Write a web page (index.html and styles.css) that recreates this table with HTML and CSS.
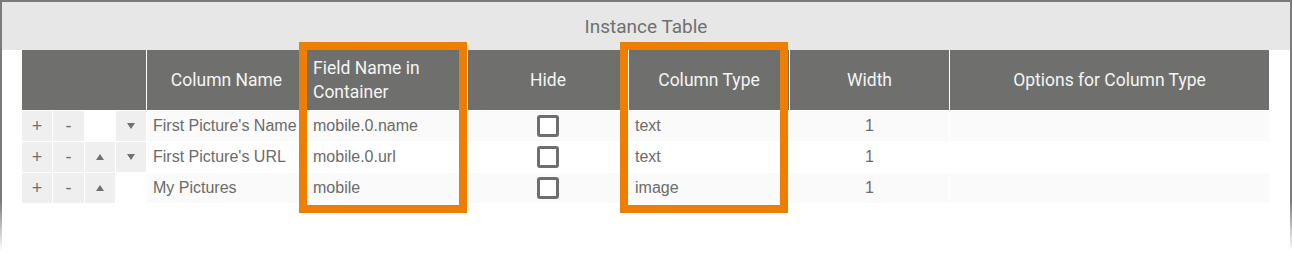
FILE: index.html
```html
<!DOCTYPE html>
<html lang="en">
<head>
    <meta charset="UTF-8">
    <title>Instance Table</title>
    <link rel="stylesheet" href="styles.css">
</head>
<body>

    <div class="frame">
        <!-- Title -->
        <div class="title-bar">Instance Table</div>

        <div class="table-wrap">
            <!-- Header row -->
            <div class="row head">
                <div class="cell"></div>
                <div class="cell">Column Name</div>
                <div class="cell left">Field Name in Container</div>
                <div class="cell">Hide</div>
                <div class="cell">Column Type</div>
                <div class="cell">Width</div>
                <div class="cell">Options for Column Type</div>
            </div>

            <div class="row body striped">
                <div class="controls">
                    <span class="btn">+</span>
                    <span class="btn">-</span>
                    <span class="btn empty"></span>
                    <span class="btn"><svg width="8" height="6" viewBox="0 0 8 6"><polygon points="0,0 8,0 4,6" fill="#707070"/></svg></span>
                </div>
                <div class="cell text">First Picture's Name</div>
                <div class="cell text">mobile.0.name</div>
                <div class="cell center"><span class="check"></span></div>
                <div class="cell text">text</div>
                <div class="cell center">1</div>
                <div class="cell"></div>
            </div>

            <div class="row body">
                <div class="controls">
                    <span class="btn">+</span>
                    <span class="btn">-</span>
                    <span class="btn"><svg width="8" height="6" viewBox="0 0 8 6"><polygon points="0,6 8,6 4,0" fill="#707070"/></svg></span>
                    <span class="btn"><svg width="8" height="6" viewBox="0 0 8 6"><polygon points="0,0 8,0 4,6" fill="#707070"/></svg></span>
                </div>
                <div class="cell text">First Picture's URL</div>
                <div class="cell text">mobile.0.url</div>
                <div class="cell center"><span class="check"></span></div>
                <div class="cell text">text</div>
                <div class="cell center">1</div>
                <div class="cell"></div>
            </div>

            <div class="row body striped">
                <div class="controls">
                    <span class="btn">+</span>
                    <span class="btn">-</span>
                    <span class="btn"><svg width="8" height="6" viewBox="0 0 8 6"><polygon points="0,6 8,6 4,0" fill="#707070"/></svg></span>
                    <span class="btn empty"></span>
                </div>
                <div class="cell text">My Pictures</div>
                <div class="cell text">mobile</div>
                <div class="cell center"><span class="check"></span></div>
                <div class="cell text">image</div>
                <div class="cell center">1</div>
                <div class="cell"></div>
            </div>
        </div>

        <!-- Highlight boxes -->
        <div class="highlight field-box"></div>
        <div class="highlight type-box"></div>
    </div>

</body>
</html>
```

FILE: styles.css
```css
* {
    margin: 0;
    padding: 0;
    box-sizing: border-box;
}

:root {
    --frame-gray: #7b7b7b;
    --title-bg: #e7e7e7;
    --head-bg: #6f706d;
    --btn-bg: #efefef;
    --stripe-bg: #fafafa;
    --text-gray: #6b6b6b;
    --orange: #ef7d00;
    --cols: 124px 159px 160px 160px 160px 159px 319px;
}

body {
    background: #ffffff;
    font-family: "Liberation Sans", Arial, sans-serif;
}

/* Outer frame, border fades out at the bottom */
.frame {
    position: relative;
    width: 1292px;
    height: 255px;
    border-style: solid;
    border-width: 2px 2px 0 2px;
    border-image: linear-gradient(to bottom, var(--frame-gray) 200px, #ffffff 250px) 1;
}

.title-bar {
    height: 48px;
    background-color: var(--title-bg);
    color: #707070;
    font-family: Roboto, sans-serif;
    font-size: 19px;
    display: flex;
    align-items: center;
    justify-content: center;
}

.table-wrap {
    padding-left: 20px;
}

.row {
    display: grid;
    grid-template-columns: var(--cols);
    column-gap: 1px;
    margin-bottom: 1px;
}

/* Header */
.head .cell {
    height: 60px;
    background-color: var(--head-bg);
    color: #f4f4f4;
    font-family: Roboto, sans-serif;
    font-size: 17.5px;
    line-height: 24.5px;
    display: flex;
    align-items: center;
    justify-content: center;
    text-align: center;
    padding: 0 6px;
}

.head .cell.left {
    justify-content: flex-start;
    text-align: left;
}

/* Body rows */
.body .cell {
    height: 30px;
    color: var(--text-gray);
    font-size: 16px;
    display: flex;
    align-items: center;
    white-space: nowrap;
    overflow: hidden;
}

.body.striped .cell {
    background-color: var(--stripe-bg);
}

.body .cell.text {
    padding-left: 6px;
}

.body .cell.center {
    justify-content: center;
}

.controls {
    display: grid;
    grid-template-columns: repeat(4, 1fr);
    column-gap: 1px;
}

.btn {
    height: 30px;
    background-color: var(--btn-bg);
    color: #707070;
    font-size: 18px;
    display: flex;
    align-items: center;
    justify-content: center;
}

.btn.empty {
    background: none;
}

.check {
    width: 22px;
    height: 22px;
    border: 3px solid #6e6e6e;
    border-radius: 3px;
    background: #ffffff;
}

/* Orange annotation boxes */
.highlight {
    position: absolute;
    top: 40px;
    width: 168px;
    height: 171px;
    border: 8px solid var(--orange);
}

.field-box {
    left: 297px;
}

.type-box {
    left: 618px;
}
```
